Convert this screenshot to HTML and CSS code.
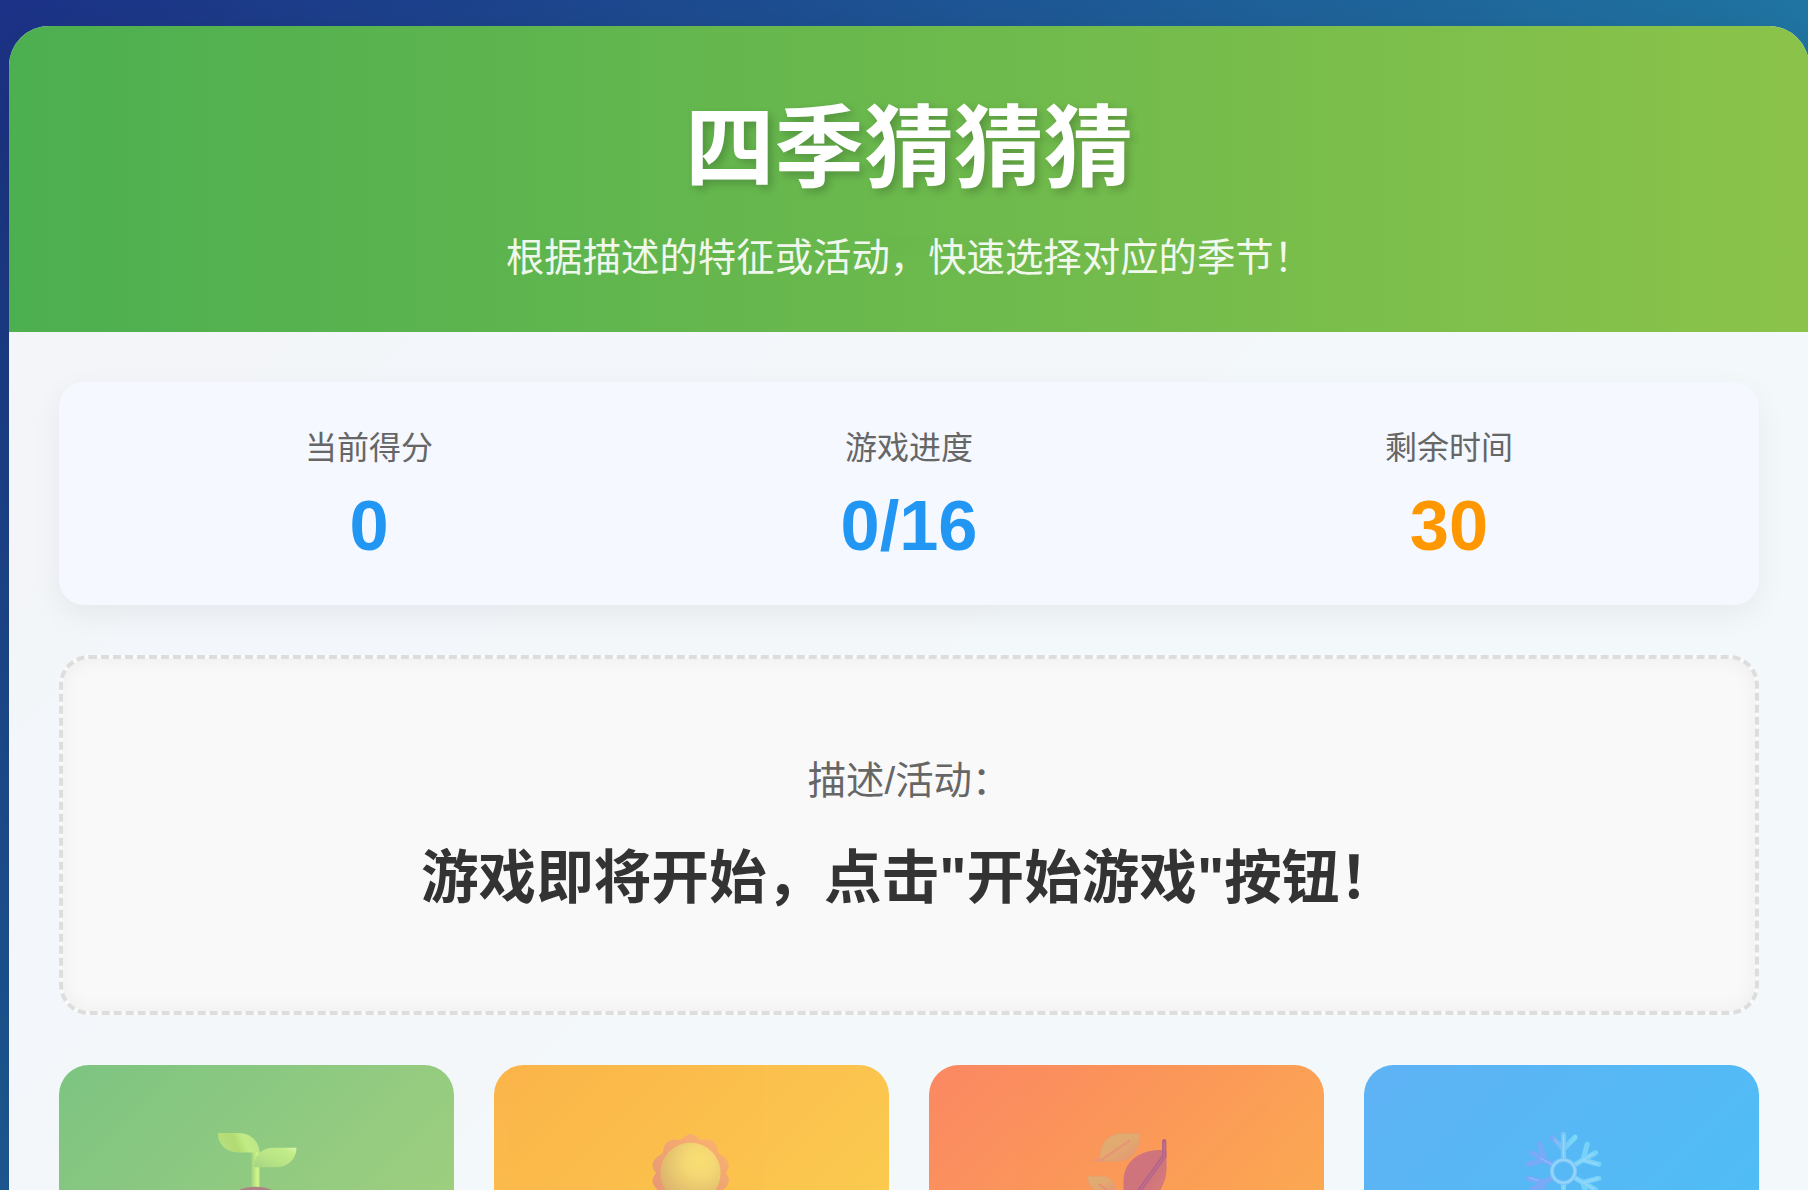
FILE: index.html
```html
<!DOCTYPE html>
<html lang="zh-CN">
<head>
<meta charset="UTF-8">
<title>四季猜猜猜</title>
<link rel="stylesheet" href="styles.css">
</head>
<body>
<div class="container">
  <header class="header">
    <h1 class="title">四季猜猜猜</h1>
    <p class="subtitle">根据描述的特征或活动，快速选择对应的季节！</p>
  </header>
  <main class="content">
    <section class="stats">
      <div class="stat"><div class="stat-label">当前得分</div><div class="stat-value">0</div></div>
      <div class="stat"><div class="stat-label">游戏进度</div><div class="stat-value">0/16</div></div>
      <div class="stat"><div class="stat-label">剩余时间</div><div class="stat-value timer">30</div></div>
    </section>
    <section class="question">
      <div class="question-label">描述/活动：</div>
      <div class="question-text">游戏即将开始，点击"开始游戏"按钮！</div>
    </section>
    <section class="seasons">
      <button class="season spring" aria-label="春">
        <svg class="icon" viewBox="0 0 80 80">
          <defs>
            <linearGradient id="stem"><stop offset="0" stop-color="#82c44c"/><stop offset=".7" stop-color="#c1f45a"/><stop offset="1" stop-color="#b4ea54"/></linearGradient>
            <linearGradient id="leafL" x1="0" y1=".5" x2="1" y2=".3"><stop offset="0" stop-color="#9cd84c"/><stop offset=".4" stop-color="#98cf3a"/><stop offset=".65" stop-color="#ade856"/><stop offset="1" stop-color="#a6de58"/></linearGradient>
            <linearGradient id="leafR" x1="0" y1="1" x2="1" y2="0"><stop offset="0" stop-color="#84c650"/><stop offset=".45" stop-color="#a2de56"/><stop offset=".8" stop-color="#ace858"/><stop offset="1" stop-color="#d6f88c"/></linearGradient>
          </defs>
          <rect x="34.5" y="20" width="8" height="40" fill="url(#stem)"/>
          <path d="M.8 3H21C34 3 42.5 12 42.5 22.5H21C9 22.5 .8 14 .8 3Z" fill="url(#leafL)"/>
          <path d="M36.8 37.2C36.8 25 45 17.7 57 17.7H79.5C79.5 29 71 37.2 59 37.2Z" fill="url(#leafR)"/>
          <ellipse cx="38.3" cy="71" rx="26" ry="14.3" fill="#925254"/>
        </svg>
      </button>
      <button class="season summer" aria-label="夏">
        <svg class="icon" viewBox="0 0 80 80">
          <defs>
            <linearGradient id="rays" x1=".1" y1="1" x2=".8" y2="0"><stop offset="0" stop-color="#e0683f"/><stop offset=".6" stop-color="#f08238"/><stop offset="1" stop-color="#ff9638"/></linearGradient>
            <radialGradient id="disc" cx=".66" cy=".3" r=".8"><stop offset="0" stop-color="#fdd53c"/><stop offset=".35" stop-color="#f4c83a"/><stop offset="1" stop-color="#cc9030"/></radialGradient>
          </defs>
          <path fill="url(#rays)" d="M38.5 4C44 4 46 10 50 10Q64 7 66 21Q66 24 71 26Q81 34 74 43Q81 52 71 60L66 65Q64 79 50 76L38.5 82L27 76Q13 79 11 65L6 60Q-4 52 4 43Q-4 34 6 26Q11 24 11 21Q13 7 27 10C31 10 33 4 38.5 4Z"/>
          <circle cx="38.5" cy="43" r="30.2" fill="url(#disc)"/>
        </svg>
      </button>
      <button class="season autumn" aria-label="秋">
        <svg class="icon" viewBox="0 0 80 80">
          <defs>
            <linearGradient id="gold" x1="0" y1="0" x2="1" y2="1"><stop offset="0" stop-color="#d68f34"/><stop offset=".5" stop-color="#dc8838"/><stop offset="1" stop-color="#de683c"/></linearGradient>
            <linearGradient id="red" x1="0" y1="0" x2="1" y2="1"><stop offset="0" stop-color="#c43c46"/><stop offset=".5" stop-color="#c03c48"/><stop offset="1" stop-color="#d25240"/></linearGradient>
          </defs>
          <path d="M12.8 30.5C12 14 22 3.6 35 3.6H53C53 18 46 31.2 30 31.2H13Z" fill="url(#gold)" stroke="#dc783c" stroke-width=".8"/>
          <path d="M6.5 30.2H14L42.8 10.5" fill="none" stroke="#e26c3e" stroke-width="2.4" stroke-linejoin="round"/>
          <path d="M79 20.7C52 19 37 32 37 51V80H54C70 68 79 54 79 37Z" fill="url(#red)" stroke="#bd3c4a" stroke-width="1"/>
          <path d="M77.2 11V26L40 78" fill="none" stroke="#9c2458" stroke-width="4.2" stroke-linecap="round" stroke-linejoin="round"/>
          <path d="M77.3 12V26L41 77" fill="none" stroke="#ad3c60" stroke-width="1.2"/>
          <path d="M.5 46.3H15C24 46.3 29 54 29 64H18C8 63 1 56 .5 46.3Z" fill="url(#gold)" stroke="#e2793e" stroke-width=".8"/>
          <path d="M12 54L25 64" stroke="#df6438" stroke-width="2"/>
        </svg>
      </button>
      <button class="season winter" aria-label="冬">
        <svg class="icon" viewBox="0 0 80 80">
          <defs>
            <g id="arm"><path d="M0-14V-37M0-22.5L-11.5-34M0-22.5L11.5-34" fill="none" stroke-width="5.2" stroke-linecap="round"/></g>
            <linearGradient id="frost" gradientUnits="userSpaceOnUse" x1="-13" y1="0" x2="11" y2="0"><stop offset="0" stop-color="#4088f4"/><stop offset=".5" stop-color="#46b0f4"/><stop offset="1" stop-color="#44cff8"/></linearGradient>
          </defs>
          <g transform="translate(41.5 41.3)">
            <g stroke="#42c2f8"><use href="#arm" transform="rotate(60)"/><use href="#arm" transform="rotate(120)"/><use href="#arm" transform="rotate(180)"/></g>
            <g stroke="#4688f6"><use href="#arm" transform="rotate(240)"/><use href="#arm" transform="rotate(300)"/></g>
            <use href="#arm" stroke="url(#frost)"/>
            <path d="M0-14V-36M12-7L30-17.5M12 7L30 17.5M21-11L34-7M21 11L34 7M0 14V36" stroke="#6ac8fa" stroke-width="1.8" stroke-linecap="round"/>
            <path d="M-12-7L-23-13M-6-28L-9-32M-26 9L-34 6.5" stroke="#68a4f8" stroke-width="1.2" stroke-linecap="round"/>
            <circle r="11.5" fill="none" stroke="#4cb2f7" stroke-width="4.2"/>
            <circle r="11.5" fill="none" stroke="#70c8fa" stroke-width="1.8"/>
          </g>
        </svg>
      </button>
    </section>
  </main>
</div>
</body>
</html>
```
FILE: styles.css
```css
* { box-sizing: border-box; margin: 0; padding: 0; }

html { height: 100%; overflow: hidden; }

body {
  height: 100%;
  overflow: hidden;
  padding: 26px 0 0 9px;
  font-family: "Liberation Sans", "Noto Sans CJK SC", sans-serif;
  color: #333;
  background: linear-gradient(135deg, #1c3287 0%, #2075a3 60%, #2283a8 100%);
}

.container {
  width: 1800px;
  height: 1700px;
  border-radius: 40px;
  overflow: hidden;
  background: rgba(255, 255, 255, 0.95);
  box-shadow: 0 30px 80px rgba(0, 0, 0, 0.2);
}

.header {
  height: 306px;
  padding-top: 63px;
  text-align: center;
  color: #fff;
  background: linear-gradient(90deg, #4caf50, #8bc34a);
}

.title {
  font-size: 89.6px;
  line-height: 120px;
  font-weight: 700;
  text-shadow: 4px 4px 8px rgba(0, 0, 0, 0.2);
}

.subtitle {
  margin-top: 19px;
  font-size: 38.4px;
  line-height: 60px;
  opacity: 0.9;
}

.content { padding: 50px; }

.stats {
  display: grid;
  grid-template-columns: repeat(3, 1fr);
  height: 223px;
  padding: 43px 40px 37px;
  border-radius: 25px;
  text-align: center;
  background: #f5f8ff;
  box-shadow: 0 10px 30px rgba(0, 0, 0, 0.06);
}

.stat-label { font-size: 32px; line-height: 46px; color: #666; }
.stat-value { margin-top: 15px; font-size: 70.4px; line-height: 80px; font-weight: 700; color: #2196f3; }
.stat-value.timer { color: #ff9800; }

.question {
  display: flex;
  flex-direction: column;
  align-items: center;
  justify-content: center;
  height: 360px;
  margin: 50px 0;
  padding-top: 3px;
  border: 4px dashed #ddd;
  border-radius: 30px;
  background: #f9f9f9;
  box-shadow: inset 0 0 20px rgba(0, 0, 0, 0.05);
}

.question-label { font-size: 38.4px; line-height: 56px; color: #666; }
.question-text { margin-top: 27px; font-size: 57.6px; line-height: 84px; font-weight: 700; }

.seasons { display: grid; grid-template-columns: repeat(4, 1fr); gap: 40px; }

.season {
  display: flex;
  justify-content: center;
  height: 320px;
  padding-top: 65px;
  border: 0;
  border-radius: 30px;
  opacity: 0.7;
}

.spring { background: linear-gradient(135deg, #4caf50, #8bc34a); }
.summer { background: linear-gradient(135deg, #ff9800, #ffc107); }
.autumn { background: linear-gradient(135deg, #ff5722, #ff9800); }
.winter { background: linear-gradient(135deg, #2196f3, #03a9f4); }

.icon { width: 80px; height: 80px; overflow: visible; }
```
